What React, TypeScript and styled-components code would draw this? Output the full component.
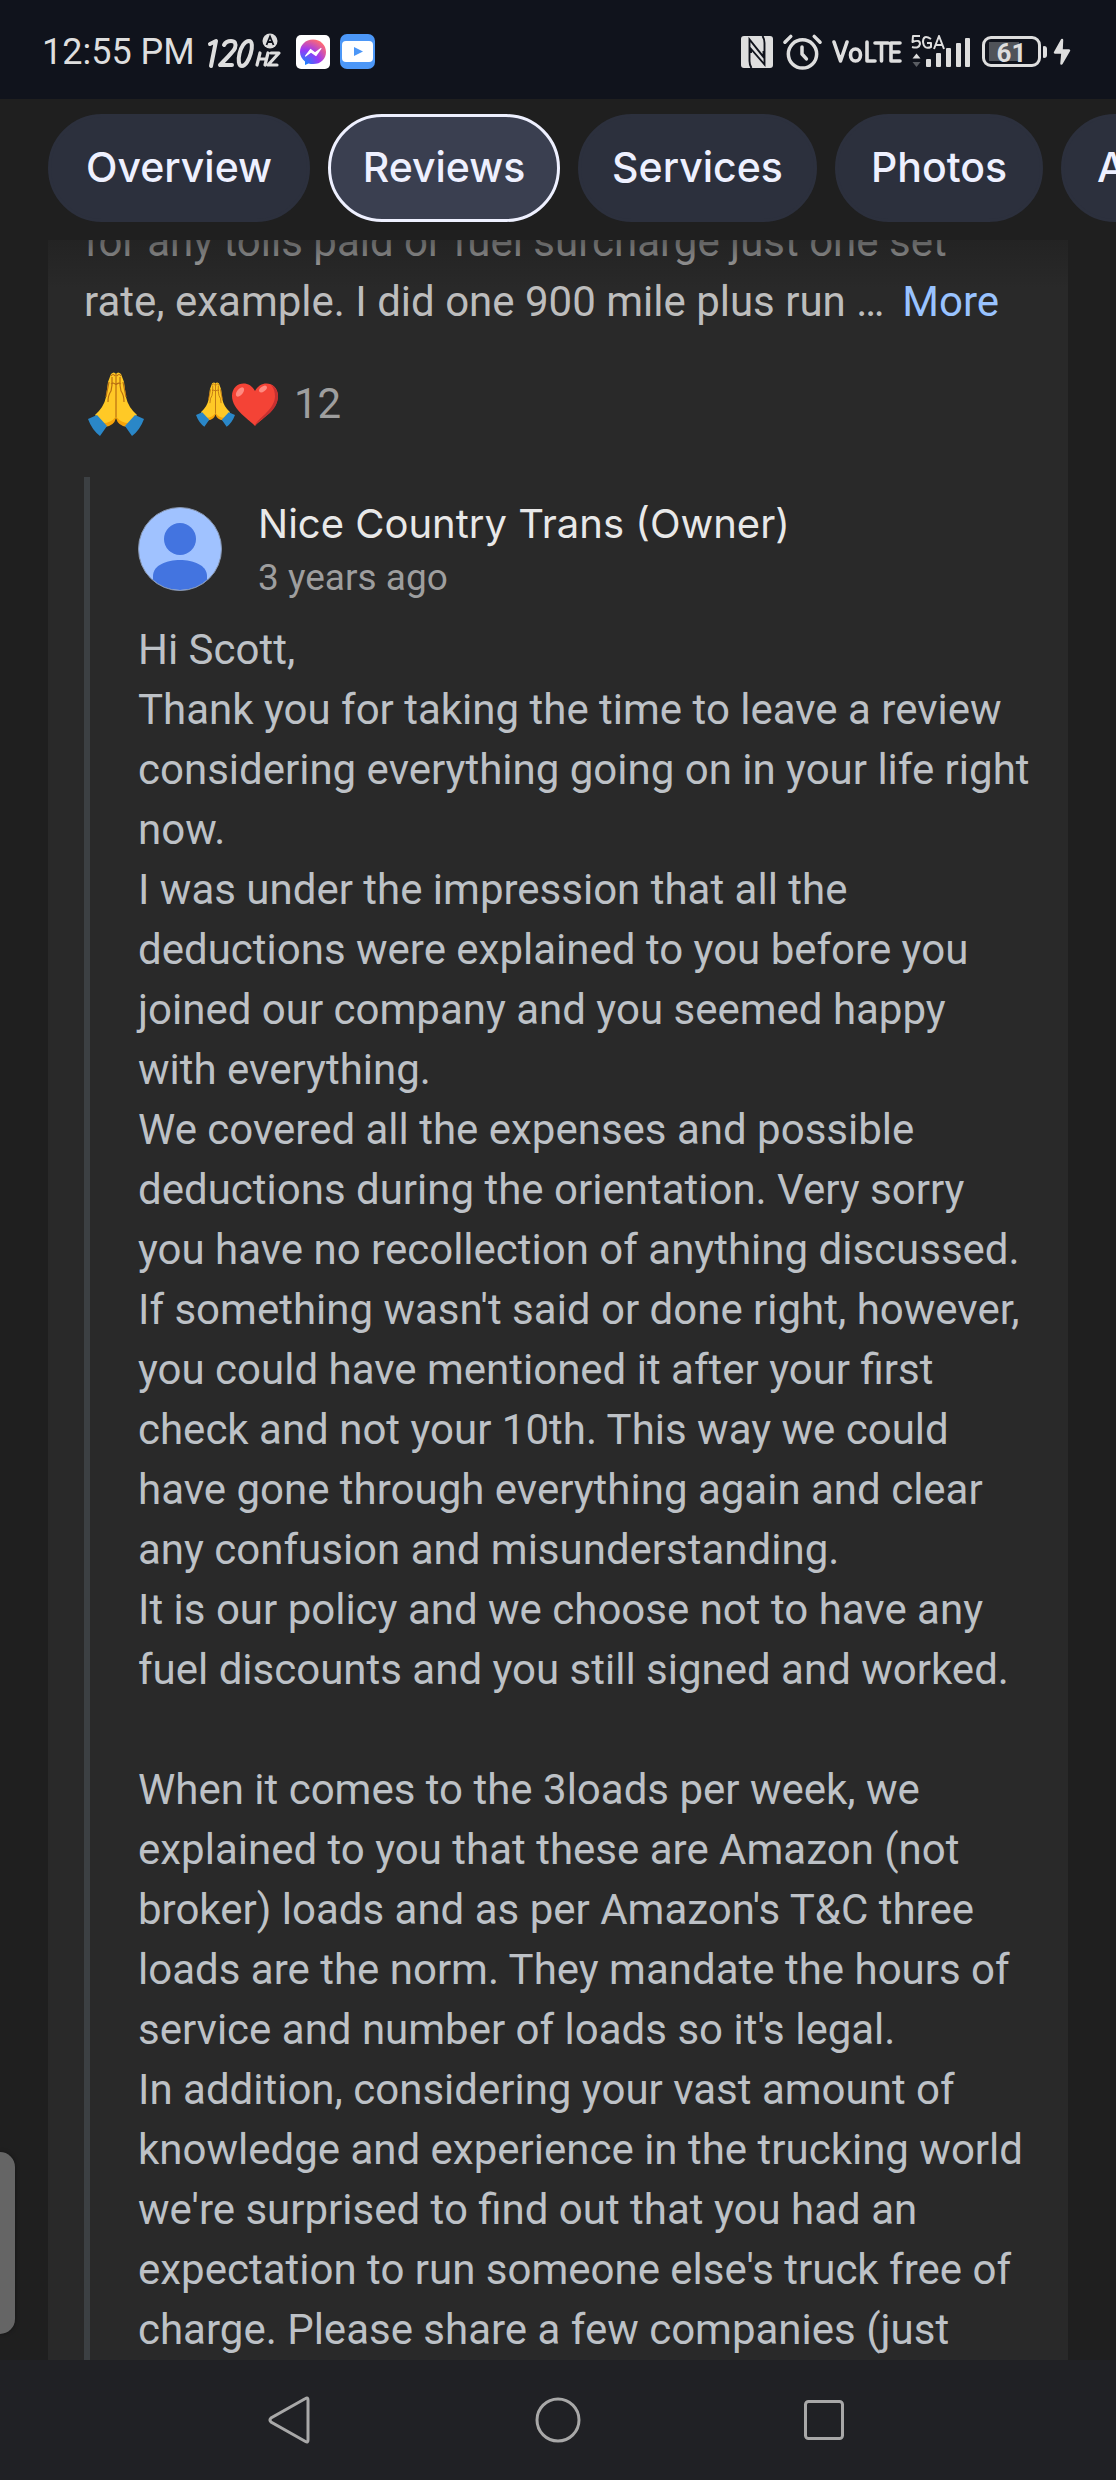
import React from "react";
import styled, { createGlobalStyle } from "styled-components";

const GlobalStyle = createGlobalStyle`
  *, *::before, *::after { box-sizing: border-box; }
  body { margin: 0; background: #1f1f1f; font-family: Roboto, "Liberation Sans", sans-serif; }
  button { font: inherit; color: inherit; background: none; border: 0; padding: 0; margin: 0; cursor: pointer; }
  svg { display: block; flex: none; }
`;

const Screen = styled.div`
  position: relative;
  display: flex;
  flex-direction: column;
  height: 100vh;
  overflow: hidden;
`;

const StatusBar = styled.header`
  flex: none;
  display: flex;
  justify-content: space-between;
  align-items: center;
  height: 99px;
  padding: 4px 45px 0 42px;
  background: #10131c;
  color: #dedede;
`;

const StatusGroup = styled.div<{ $gap: number }>`
  display: flex;
  align-items: center;
  gap: ${(p) => p.$gap}px;
`;

const Clock = styled.time`
  font-size: 36px;
  line-height: 48px;
  white-space: nowrap;
`;

const Tabs = styled.nav`
  flex: none;
  display: flex;
  gap: 18px;
  height: 141px;
  padding: 15px 0 18px 48px;
  overflow: hidden;
  background: #1f1f1f;
`;

const Chip = styled.button<{ $width: number; $active?: boolean }>`
  && {
    flex: none;
    width: ${(p) => p.$width}px;
    height: 108px;
    padding: 0 0 2px;
    border: 3px solid ${(p) => (p.$active ? "#eef0ff" : "#2c303d")};
    border-radius: 54px;
    background: ${(p) => (p.$active ? "#3a3f50" : "#2c303d")};
    color: #eef0ff;
    font-family: Inter, Roboto, sans-serif;
    font-size: 41px;
    font-weight: 500;
    line-height: 60px;
    white-space: nowrap;
  }
`;

const Scroller = styled.main`
  position: relative;
  flex: 1;
  min-height: 0;
  overflow: hidden;
  padding: 0 48px;
  &::before {
    content: "";
    position: absolute;
    inset: 0 0 auto 0;
    height: 48px;
    background: linear-gradient(rgba(31, 31, 31, 0.6), rgba(31, 31, 31, 0));
  }
`;

const Card = styled.article`
  min-height: 100%;
  padding: 0 36px;
  background: #292929;
`;

const ReviewText = styled.p`
  margin: -28px 0 0;
  color: #bdbdbd;
  font-size: 42px;
  line-height: 60px;
`;

const More = styled.button`
  && {
    margin-left: 18px;
    color: #99c3ff;
  }
`;

const Reactions = styled.div`
  display: flex;
  align-items: center;
  height: 72px;
  margin: 36px 0 37px;
  color: #9e9e9e;
  font-size: 42px;
  line-height: 60px;
`;

const ReactButton = styled.button`
  && {
    padding: 0 4px;
  }
`;

const ReactionCount = styled.button`
  && {
    display: flex;
    align-items: center;
    margin-left: 48px;
  }
`;

const HeartIcon = styled.svg`
  margin-left: -4px;
`;

const Count = styled.span`
  margin-left: 15px;
`;

const Reply = styled.section`
  padding: 24px 0 0 48px;
  border-left: 6px solid #3c4043;
`;

const ReplyHead = styled.header`
  display: flex;
  align-items: center;
  gap: 36px;
  height: 96px;
`;

const Byline = styled.div`
  padding-top: 4px;
`;

const Owner = styled.h2`
  margin: 0;
  color: #e8e8e8;
  font-family: Inter, Roboto, sans-serif;
  font-size: 40px;
  font-weight: 400;
  line-height: 54px;
`;

const Age = styled.p`
  margin: 0;
  color: #9e9e9e;
  font-size: 37px;
  line-height: 54px;
`;

const ReplyText = styled.p`
  margin: 23px 0 0;
  color: #bdc1c6;
  font-size: 42px;
  line-height: 60px;
  white-space: pre-line;
`;

const EdgeHandle = styled.div`
  position: absolute;
  left: 0;
  bottom: 146px;
  width: 15px;
  height: 182px;
  border-radius: 0 20px 20px 0;
  background: #656565;
  box-shadow: 0 0 4px rgba(0, 0, 0, 0.4);
`;

const NavBar = styled.footer`
  flex: none;
  display: flex;
  justify-content: center;
  gap: 206px;
  height: 120px;
  background: #202125;
`;

const NavButton = styled.button`
  && {
    display: grid;
    place-items: center;
    width: 60px;
  }
`;

const Folded = ({ width, height }: { width: number; height: number }) => (
  <svg width={width} height={height} viewBox="8 7 56 64" role="img" aria-label="Folded hands">
    <path d="M36 9 Q34 6 31 9 L28 17 L26 32 Q24 42 15 50 L25 61 Q34 57 36 52 Q38 57 47 61 L57 50 Q48 42 46 32 L44 17 L41 9 Q38 6 36 9Z" fill="#ffc926" />
    <path d="M23 58 Q31 58 35.500 52 L36 53 Q34 61 25 62Z M49 58 Q41 58 36.500 52 L36 53 Q38 61 47 62Z" fill="#f5a30a" />
    <path d="M36 9V52 M32 12V20L31 26Q28 30 28 37 M40 12V20L41 26Q44 30 44 37 M29 17L26 32 M43 17L46 32 M31 11Q33 8 35 11 M37 11Q39 8 41 11 M31 19Q34 17 36 20Q38 17 41 19" fill="none" stroke="#b96f12" strokeWidth="1.200" />
    <path d="M8 54 L17 50 L27 61 L20 71 Q12 65 8 54Z M64 54 L55 50 L45 61 L52 71 Q60 65 64 54Z" fill="#2a87c8" />
  </svg>
);

const Heart = () => (
  <HeartIcon width="48" height="46" viewBox="0 1 48 46" role="img" aria-label="Heart">
    <path d="M24 46C19 40 1 30 1 16 1 2 18-1 24 11 30-1 47 2 47 16 47 30 29 40 24 46Z" fill="#f44336" />
    <path d="M40 5C50 9 49 24 39 33 33 38 27 41 24 46 25 39 43 31 44 17 44 12 43 8 40 5Z" fill="#c63030" />
    <ellipse cx="9" cy="12" rx="3" ry="5.500" transform="rotate(38 9 12)" fill="#ff8a80" />
    <ellipse cx="32" cy="9" rx="2.500" ry="4.500" transform="rotate(52 32 9)" fill="#ff8a80" />
  </HeartIcon>
);

const Avatar = () => (
  <svg width="84" height="84" viewBox="0 0 84 84" aria-hidden="true">
    <defs>
      <clipPath id="face"><circle cx="42" cy="42" r="41" /></clipPath>
    </defs>
    <circle cx="42" cy="42" r="41.500" fill="#a0c2ff" />
    <g clipPath="url(#face)" fill="#4374e0">
      <circle cx="42" cy="32" r="16" />
      <path d="M15 84V69C15 58 29 53 42 53S69 58 69 69V84Z" />
    </g>
    <circle cx="42" cy="42" r="41.500" fill="none" stroke="#8796b0" strokeWidth="1" />
  </svg>
);

const Hz = () => (
  <svg width="74" height="38" viewBox="1 0 74 38" role="img" aria-label="120 hertz, automatic">
    <g fill="none" stroke="#dedede" strokeWidth="4" strokeLinecap="round" strokeLinejoin="round">
      <path d="M4 11L10 8L5 33" />
      <path d="M18 12Q20 8 25 8Q31 8 29 15Q28 18 14 32H26" />
      <path d="M43 8C34 8 29 33 36 33S50 8 43 8Z" />
      <path d="M54 20L51 32M62 20L59 32M53 26H60M65 20H73L62 32H71" strokeWidth="3.200" />
    </g>
    <circle cx="64" cy="8" r="7.500" fill="#dedede" />
    <path d="M60.500 12L64 3.500L67.500 12M62 9H66" fill="none" stroke="#10131c" strokeWidth="1.800" />
  </svg>
);

const Messenger = () => (
  <svg width="34" height="34" viewBox="0 0 34 34" role="img" aria-label="Messenger">
    <defs>
      <radialGradient id="msg" cx="0.150" cy="1" r="1.100">
        <stop offset="0" stopColor="#0a8cff" />
        <stop offset="0.550" stopColor="#9a38f5" />
        <stop offset="1" stopColor="#ff6a72" />
      </radialGradient>
    </defs>
    <rect width="34" height="34" rx="5" fill="#fff" />
    <path d="M17 4.500C9.500 4.500 4 10 4 17C4 21 6 24 9 26.500V30L12.500 28.500C23 31 30 25 30 17C30 10 24.500 4.500 17 4.500Z" fill="url(#msg)" />
    <path d="M9.500 21L14.500 14.500L19 18L25 13.500L20 20.500L15 17Z" fill="#fff" stroke="#fff" strokeWidth="1.200" strokeLinejoin="round" />
  </svg>
);

const Video = () => (
  <svg width="35" height="35" viewBox="0 0 35 35" role="img" aria-label="Video">
    <rect width="35" height="35" rx="7" fill="#4c97f7" />
    <rect x="2" y="7" width="31" height="21" rx="4" fill="#fff" />
    <path d="M14 13V22L23 17.500Z" fill="#4c97f7" />
  </svg>
);

const Nfc = () => (
  <svg width="32" height="32" viewBox="0 0 32 32" role="img" aria-label="NFC">
    <rect width="32" height="32" rx="3" fill="#dedede" />
    <path d="M10.500 32Q8.500 29 8.500 25V3.500L22.500 21V15M21.500 0Q23.500 3 23.500 7V28.500L10 13V17" fill="none" stroke="#10131c" strokeWidth="1.900" />
  </svg>
);

const Alarm = () => (
  <svg width="41" height="38" viewBox="0 0 42 38" role="img" aria-label="Alarm">
    <g fill="none" stroke="#dedede" strokeWidth="3.600" strokeLinecap="round" strokeLinejoin="round">
      <circle cx="21" cy="21" r="14.500" />
      <path d="M20.500 14V21L25 26M3 9L9 3M39 9L33 3" />
    </g>
  </svg>
);

const Volte = () => (
  <svg width="70" height="24" viewBox="0 0 70 24" role="img" aria-label="VoLTE">
    <g fill="none" stroke="#dedede" strokeWidth="3.600" strokeLinecap="round" strokeLinejoin="round">
      <path d="M2 2L8.500 21L15 2M35 2V21H43M43 3H56M49.500 3V21M68 3H59V21H68M59 12H67" />
      <ellipse cx="23.500" cy="15" rx="5" ry="6" />
    </g>
  </svg>
);

const Signal = () => (
  <svg width="62" height="34" viewBox="0 0 62 34" role="img" aria-label="5GA signal">
    <g fill="none" stroke="#dedede" strokeWidth="2" strokeLinejoin="round">
      <path d="M9 1H2L1.500 7Q9 4 9 9Q8 14 1 12M20 4Q12 -1 12 7Q13 15 20 12V8H16M23 14L28 1L33 14M25 10H31" />
    </g>
    <path d="M1.500 23.500L5.500 18.500L9.500 23.500Z" fill="#dedede" />
    <path d="M1.500 27L5.500 32L9.500 27Z" fill="#5a5d63" />
    <g fill="#dedede">
      <rect x="15" y="24" width="5" height="8" rx="1" />
      <rect x="25" y="18" width="5" height="14" rx="1" />
      <rect x="35" y="13" width="5" height="19" rx="1" />
      <rect x="45" y="8" width="5" height="24" rx="1" />
      <rect x="54" y="3" width="5" height="29" rx="1" />
    </g>
  </svg>
);

const Battery = styled.div`
  position: relative;
  display: grid;
  place-items: center;
  width: 59px;
  height: 31px;
  border: 3px solid #dedede;
  border-radius: 9px;
  background: linear-gradient(#505359, #505359) 4px center / 30px 19px no-repeat;
  font-size: 26px;
  font-weight: 700;
  line-height: 28px;
  &::after {
    content: "";
    position: absolute;
    right: -9px;
    top: 7px;
    width: 4px;
    height: 12px;
    border-radius: 1px 3px 3px 1px;
    background: #dedede;
  }
`;

const BoltIcon = styled.svg`
  margin-left: 3px;
`;

const Bolt = () => (
  <BoltIcon width="18" height="28" viewBox="0 0 18 28" role="img" aria-label="Charging">
    <path d="M9 2L2 14.500H9.500L8.500 25.500L16 12.500H8.500Z" fill="#dedede" stroke="#dedede" strokeWidth="2.500" strokeLinejoin="round" />
  </BoltIcon>
);

const tabs = [
  { label: "Overview", width: 262 },
  { label: "Reviews", width: 232 },
  { label: "Services", width: 239 },
  { label: "Photos", width: 208 },
  { label: "About", width: 190 },
];

const reply = `Hi Scott,
Thank you for taking the time to leave a review considering everything going on in your life right now.
I was under the impression that all the deductions were explained to you before you joined our company and you seemed happy with everything.
We covered all the expenses and possible deductions during the orientation. Very sorry you have no recollection of anything discussed. If something wasn't said or done right, however, you could have mentioned it after your first check and not your 10th. This way we could have gone through everything again and clear any confusion and misunderstanding.
It is our policy and we choose not to have any fuel discounts and you still signed and worked.

When it comes to the 3loads per week, we explained to you that these are Amazon (not broker) loads and as per Amazon's T&C three loads are the norm. They mandate the hours of service and number of loads so it's legal.
In addition, considering your vast amount of knowledge and experience in the trucking world we're surprised to find out that you had an expectation to run someone else's truck free of charge. Please share a few companies (just`;

export default function App() {
  return (
    <Screen>
      <GlobalStyle />
      <StatusBar>
        <StatusGroup $gap={12}>
          <Clock>12:55 PM</Clock>
          <StatusGroup $gap={15}>
            <Hz />
            <StatusGroup $gap={10}>
              <Messenger />
              <Video />
            </StatusGroup>
          </StatusGroup>
        </StatusGroup>
        <StatusGroup $gap={9}>
          <Nfc />
          <Alarm />
          <Volte />
          <Signal />
          <Battery>61</Battery>
          <Bolt />
        </StatusGroup>
      </StatusBar>
      <Tabs>
        {tabs.map(({ label, width }) => (
          <Chip key={label} $width={width} $active={label === "Reviews"} aria-pressed={label === "Reviews"}>{label}</Chip>
        ))}
      </Tabs>
      <Scroller>
        <Card>
          <ReviewText>
            for any tolls paid or fuel surcharge just one set<br />
            rate, example. I did one 900 mile plus run …<More>More</More>
          </ReviewText>
          <Reactions>
            <ReactButton aria-label="React"><Folded width={56} height={64} /></ReactButton>
            <ReactionCount>
              <Folded width={39} height={45} />
              <Heart />
              <Count>12</Count>
            </ReactionCount>
          </Reactions>
          <Reply>
            <ReplyHead>
              <Avatar />
              <Byline>
                <Owner>Nice Country Trans (Owner)</Owner>
                <Age>3 years ago</Age>
              </Byline>
            </ReplyHead>
            <ReplyText>{reply}</ReplyText>
          </Reply>
        </Card>
      </Scroller>
      <EdgeHandle />
      <NavBar>
        <NavButton aria-label="Back">
          <svg width="48" height="48" viewBox="2 0 48 48"><path d="M39.500 2.500Q42 1 42 4V44Q42 47 39.500 45.500L5 26Q3 24 5 22Z" fill="none" stroke="#a8a8a8" strokeWidth="3" /></svg>
        </NavButton>
        <NavButton aria-label="Home">
          <svg width="48" height="48" viewBox="0 0 48 48"><circle cx="24" cy="24" r="21" fill="none" stroke="#a8a8a8" strokeWidth="3" /></svg>
        </NavButton>
        <NavButton aria-label="Recent apps">
          <svg width="48" height="48" viewBox="0 0 48 48"><rect x="5.500" y="5.500" width="37" height="37" rx="3" fill="none" stroke="#a8a8a8" strokeWidth="3" /></svg>
        </NavButton>
      </NavBar>
    </Screen>
  );
}
